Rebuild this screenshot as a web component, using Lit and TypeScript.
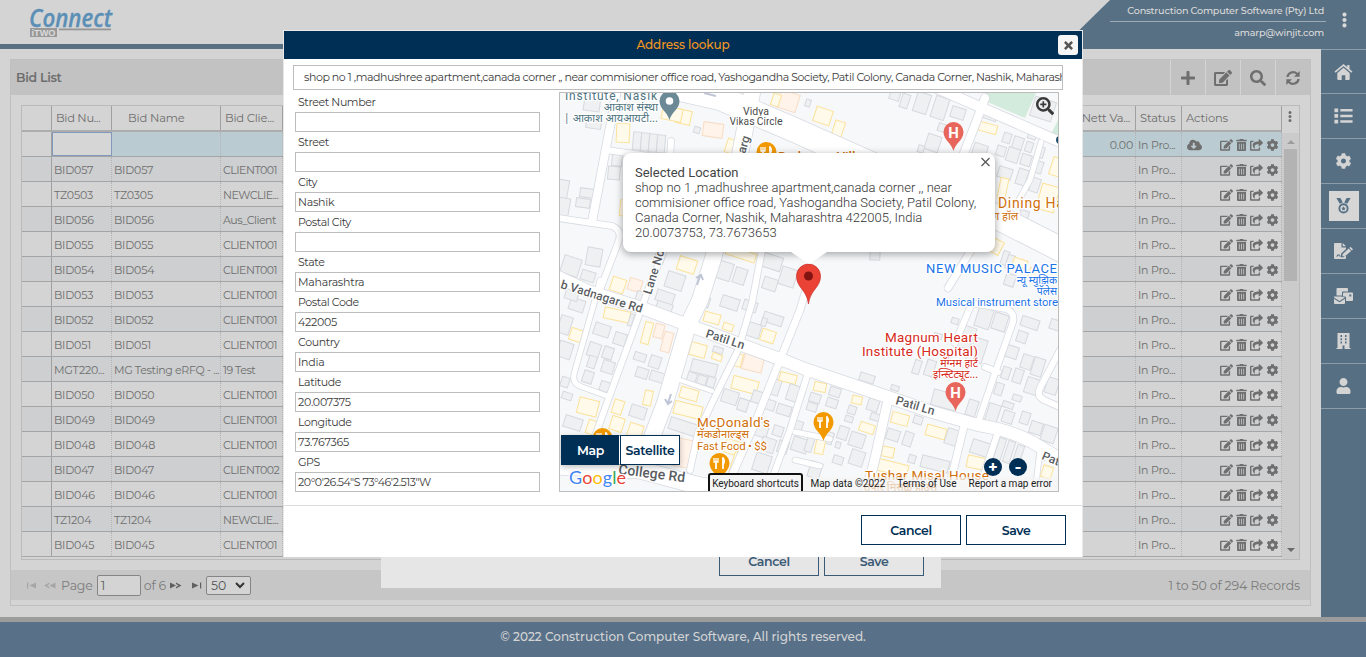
import { LitElement, html, css, svg } from 'lit';
import { customElement } from 'lit/decorators.js';

const ICONS: Record<string, [string, string]> = {
  edit: ['0 0 576 512', 'M402.6 83.2l90.2 90.2c3.8 3.8 3.8 10 0 13.8L274.4 405.6l-92.8 10.3c-12.4 1.4-22.9-9.1-21.5-21.5l10.3-92.8L388.8 83.2c3.8-3.8 10-3.8 13.8 0zm162-22.9l-48.8-48.8c-15.2-15.2-39.9-15.2-55.2 0l-35.4 35.4c-3.8 3.8-3.8 10 0 13.8l90.2 90.2c3.8 3.8 10 3.8 13.8 0l35.4-35.4c15.2-15.3 15.2-40 0-55.2zM384 346.2V448H64V128h229.8c3.2 0 6.2-1.3 8.5-3.5l40-40c7.6-7.6 2.2-20.5-8.5-20.5H48C21.5 64 0 85.5 0 112v352c0 26.5 21.5 48 48 48h352c26.5 0 48-21.5 48-48V306.2c0-10.7-12.9-16-20.5-8.5l-40 40c-2.2 2.3-3.5 5.3-3.5 8.5z'],
  cog: ['0 0 512 512', 'M487.4 315.7l-42.6-24.6c4.3-23.2 4.3-47 0-70.2l42.6-24.6c4.9-2.8 7.1-8.6 5.5-14-11.1-35.6-30-67.8-54.7-94.6-3.8-4.1-10-5.1-14.8-2.3L380.8 110c-17.9-15.4-38.5-27.3-60.8-35.1V25.8c0-5.6-3.9-10.5-9.4-11.7-36.7-8.2-74.3-7.8-109.2 0-5.5 1.2-9.4 6.1-9.4 11.7V75c-22.2 7.9-42.8 19.8-60.8 35.1L88.7 85.5c-4.9-2.8-11-1.9-14.8 2.3-24.7 26.7-43.6 58.9-54.7 94.6-1.7 5.4.6 11.2 5.5 14L67.3 221c-4.3 23.2-4.3 47 0 70.2l-42.6 24.6c-4.9 2.8-7.1 8.6-5.5 14 11.1 35.6 30 67.8 54.7 94.6 3.8 4.1 10 5.1 14.8 2.3l42.6-24.6c17.9 15.4 38.5 27.3 60.8 35.1v49.2c0 5.6 3.9 10.5 9.4 11.7 36.7 8.2 74.3 7.8 109.2 0 5.5-1.2 9.4-6.1 9.4-11.7v-49.2c22.2-7.9 42.8-19.8 60.8-35.1l42.6 24.6c4.9 2.8 11 1.9 14.8-2.3 24.7-26.7 43.6-58.9 54.7-94.6 1.5-5.5-.7-11.3-5.6-14.1zM256 336c-44.1 0-80-35.9-80-80s35.9-80 80-80 80 35.9 80 80-35.9 80-80 80z'],
  user: ['0 0 448 512', 'M224 256c70.7 0 128-57.3 128-128S294.7 0 224 0 96 57.3 96 128s57.3 128 128 128zm89.6 32h-16.7c-22.2 10.2-46.9 16-72.9 16s-50.6-5.8-72.9-16h-16.7C60.2 288 0 348.2 0 422.4V464c0 26.5 21.5 48 48 48h352c26.5 0 48-21.5 48-48v-41.6c0-74.2-60.2-134.4-134.4-134.4z'],
  trash: ['0 0 448 512', 'M32 464a48 48 0 0 0 48 48h288a48 48 0 0 0 48-48V128H32zm272-256a16 16 0 0 1 32 0v224a16 16 0 0 1-32 0zm-96 0a16 16 0 0 1 32 0v224a16 16 0 0 1-32 0zm-96 0a16 16 0 0 1 32 0v224a16 16 0 0 1-32 0zM432 32H312l-9.4-18.7A24 24 0 0 0 281.1 0H166.8a23.72 23.72 0 0 0-21.4 13.3L136 32H16A16 16 0 0 0 0 48v32a16 16 0 0 0 16 16h416a16 16 0 0 0 16-16V48a16 16 0 0 0-16-16z'],
  search: ['0 0 512 512', 'M505 442.7L405.3 343c-4.5-4.5-10.6-7-17-7H372c27.6-35.3 44-79.7 44-128C416 93.1 322.9 0 208 0S0 93.1 0 208s93.1 208 208 208c48.3 0 92.7-16.4 128-44v16.3c0 6.4 2.5 12.5 7 17l99.7 99.7c9.4 9.4 24.6 9.4 33.9 0l28.3-28.3c9.4-9.4 9.4-24.6.1-34zM208 336c-70.7 0-128-57.2-128-128 0-70.7 57.2-128 128-128 70.7 0 128 57.2 128 128 0 70.7-57.2 128-128 128z'],
  zoom: ['0 0 512 512', 'M505 442.7L405.3 343c-4.5-4.5-10.6-7-17-7H372c27.6-35.3 44-79.7 44-128C416 93.1 322.9 0 208 0S0 93.1 0 208s93.1 208 208 208c48.3 0 92.7-16.4 128-44v16.3c0 6.4 2.5 12.5 7 17l99.7 99.7c9.4 9.4 24.6 9.4 33.9 0l28.3-28.3c9.4-9.4 9.4-24.6.1-34zM208 346c-76 0-138-62-138-138S132 70 208 70s138 62 138 138-62 138-138 138zM184 120h48v64h64v48h-64v64h-48v-64h-64v-48h64z'],
  plus: ['0 0 448 512', 'M416 208H272V64c0-17.7-14.300-32-32-32h-32c-17.700 0-32 14.300-32 32v144H32c-17.700 0-32 14.300-32 32v32c0 17.700 14.300 32 32 32h144v144c0 17.700 14.300 32 32 32h32c17.700 0 32-14.300 32-32V304h144c17.700 0 32-14.300 32-32v-32c0-17.700-14.300-32-32-32z'],
  share: ['0 0 576 512', 'M568.500 177.400L424.500 313.400C409.300 327.800 384 317.100 384 296v-72c-144.600 1-205.600 35.100-164.800 171.400 4.500 15.100-12.800 26.600-25 17.300C155.300 383.100 120 326.500 120 269.300c0-143.900 117.600-172.500 264-173.300V24c0-21.100 25.300-31.800 40.500-17.400l144 136c10 9.500 10 25.400 0 34.800zM384 379.100V448H64V128h50.900a12 12 0 0 0 8.600-3.700c15.300-15.800 33.200-28.400 52.800-37.900C186.500 81.500 183 64 169.900 64H48C21.500 64 0 85.500 0 112v352c0 26.500 21.500 48 48 48h352c26.500 0 48-21.500 48-48v-88.800c0-8.200-7.900-14-15.700-11.700-11.800 3.400-24.100 4.100-33.100 3.400-8.400-.600-15.200 4-15.200 12.200z'],
  cloud: ['0 0 640 512', 'M537.600 226.600c4.100-10.700 6.400-22.400 6.400-34.600 0-53-43-96-96-96-19.700 0-38.100 6-53.300 16.200C367 64.200 315.300 32 256 32c-88.400 0-160 71.600-160 160 0 2.700.1 5.400.2 8.100C40.200 219.800 0 273.200 0 336c0 79.500 64.500 144 144 144h368c70.700 0 128-57.300 128-128 0-61.900-44-113.600-102.400-125.400zm-132.900 88.700L299.300 420.700c-6.200 6.200-16.400 6.200-22.600 0L171.300 315.300c-10.100-10.100-2.900-27.300 11.300-27.300H248V176c0-8.800 7.200-16 16-16h48c8.800 0 16 7.200 16 16v112h65.400c14.200 0 21.400 17.200 11.300 27.300z'],
  refresh: ['0 0 18 18', 'M1.500 8A7.600 7.600 0 0 1 14.300 3.300L16.500 1.200V7.500H10.200L12.600 5.100A5.200 5.200 0 0 0 4 8zM16.500 10A7.600 7.600 0 0 1 3.700 14.700L1.500 16.800V10.500H7.800L5.400 12.900A5.200 5.200 0 0 0 14 10z'],
  home: ['0 0 18 16', 'M9 0L0 7.500L1.100 8.800L9 2.200L16.900 8.800L18 7.500L15 5V1H12.700V3.100ZM9 3.800L2.800 9V15Q2.800 16 3.800 16H7.200V11.200H10.800V16H14.200Q15.200 16 15.200 15V9Z'],
  list: ['0 0 17 15', 'M0 .5H3.500V4H0ZM5.500 1H17V3.300H5.500ZM0 5.700H3.500V9.200H0ZM5.500 6.300H17V8.600H5.500ZM0 11H3.500V14.500H0ZM5.500 11.600H17V13.900H5.500Z'],
  medal: ['0 0 16 18', 'M0 0H4.500L7.200 5A6 6 0 0 0 3.800 6.500ZM11.500 0H16L12.200 6.500A6 6 0 0 0 8.800 5ZM8 6A5.700 5.700 0 1 1 8 17.400A5.700 5.700 0 1 1 8 6ZM8 8.100A3.600 3.600 0 1 0 8 15.300A3.600 3.600 0 1 0 8 8.100ZM8 9.300L8.800 10.900L10.500 11.100L9.200 12.300L9.600 14L8 13.200L6.400 14L6.800 12.300L5.500 11.100L7.200 10.900Z'],
  sign: ['0 0 19 16', 'M1 0H7.500V4.500H12V6L7 10.800V13.400H5.300Q4.800 12 3.700 13L3.200 13.800H2.200L3.400 11.500H4.300Q5.500 11 5.800 12.400H6.500V14.300H9.500L12 12V15Q12 16 11 16H1Q0 16 0 15V1Q0 0 1 0ZM8.700 0L12 3.300H8.700ZM16.500 3.800L19 6.200L17.800 7.400L15.400 5ZM14.700 5.600L17.100 8L11 13.300H8.500V11.300Z'],
  mail: ['0 0 19 16', 'M3.500 0H13Q14 0 14 1V3.500H9Q8 3.500 8 4.500V7.500H2.500V1Q2.500 0 3.500 0ZM10 4.500H18Q19 4.500 19 5.500V12Q19 13 18 13H12V9.500Q12 8.500 11 8.500H9V5.500Q9 4.500 10 4.500ZM15.300 6.500V8.500H17.300V6.500ZM0 8.500H7L11 9.500L5.500 13L0 9.500ZM0 10.800L5.500 14.300L11 10.800V15Q11 16 10 16H1Q0 16 0 15Z'],
  building: ['0 0 14 16', 'M1 0H13V15H14V16H8V12.500H6V16H0V15H1ZM4 2V4H5.500V2ZM8.500 2V4H10V2ZM4 5.300V7.300H5.500V5.300ZM8.500 5.300V7.300H10V5.300ZM4 8.600V10.600H5.500V8.600ZM8.500 8.600V10.600H10V8.600Z'],
  dots: ['0 0 6 18', 'M3 0A2.500 2.500 0 1 1 3 5A2.500 2.500 0 1 1 3 0ZM3 6.500A2.500 2.500 0 1 1 3 11.500A2.500 2.500 0 1 1 3 6.500ZM3 13A2.500 2.500 0 1 1 3 18A2.500 2.500 0 1 1 3 13Z'],
  close: ['0 0 10 10', 'M2 0L5 3L8 0L10 2L7 5L10 8L8 10L5 7L2 10L0 8L3 5L0 2Z'],
};

const icon = (name: string, cls = '') => html`<svg class="ic ${cls}" viewBox=${ICONS[name][0]}><path fill-rule="evenodd" d=${ICONS[name][1]}></path></svg>`;

const ROWS: [string, string, string][] = [
  ['BID057', 'BID057', 'CLIENT001'], ['TZ0503', 'TZ0305', 'NEWCLIE...'], ['BID056', 'BID056', 'Aus_Client'],
  ['BID055', 'BID055', 'CLIENT001'], ['BID054', 'BID054', 'CLIENT001'], ['BID053', 'BID053', 'CLIENT001'],
  ['BID052', 'BID052', 'CLIENT001'], ['BID051', 'BID051', 'CLIENT001'], ['MGT220...', 'MG Testing eRFQ - ...', '19 Test'],
  ['BID050', 'BID050', 'CLIENT001'], ['BID049', 'BID049', 'CLIENT001'], ['BID048', 'BID048', 'CLIENT001'],
  ['BID047', 'BID047', 'CLIENT002'], ['BID046', 'BID046', 'CLIENT001'], ['TZ1204', 'TZ1204', 'NEWCLIE...'],
  ['BID045', 'BID045', 'CLIENT001'],
];

const FIELDS: [string, string][] = [
  ['Street Number', ''], ['Street', ''], ['City', 'Nashik'], ['Postal City', ''], ['State', 'Maharashtra'],
  ['Postal Code', '422005'], ['Country', 'India'], ['Latitude', '20.007375'], ['Longitude', '73.767365'],
  ['GPS', '20°0\'26.54"S 73°46\'2.513"W'],
];

/* centre x, centre y, width, height, kind (g building, y shop, o public), rotation */
type B = [number, number, number, number, string?, number?];
const BUILDINGS: B[] = [
  [623, 133, 13, 19, 'y', 3], [637, 141, 8, 18, 'g', 5], [645, 142, 8, 18, 'g', 5], [653, 143, 8, 18, 'g', 5], [661, 144, 8, 18, 'g', 5],
  [594, 122, 15, 13, 'g', 8], [592, 104, 16, 14, 'g', 8], [617, 160, 10, 12, 'g', 5], [614, 173, 12, 13, 'g', 5], [587, 193, 14, 9, 'g', 8], [583, 203, 14, 9, 'g', 8],
  [563, 190, 10, 20, 'g', 10], [563, 209, 12, 22, 'g', 10], [684, 117, 14, 14, 'y', 12], [672, 114, 20, 13, 'y', 12], [713, 130, 20, 14, 'o', 8], [697, 130, 6, 6],
  [733, 147, 14, 14, 'y'], [788, 101, 20, 18, 'o'], [776, 100, 8, 12, 'y'], [624, 208, 8, 16, 'y', 5], [594, 257, 15, 18, 'g', 10], [571, 266, 18, 18], [588, 276, 14, 10],
  [618, 285, 14, 14, 'y'], [635, 285, 13, 12, 'o'], [687, 265, 18, 14, 'y'], [675, 281, 18, 16], [659, 259, 10, 8], [725, 271, 14, 18], [741, 254, 30, 9, 'y'], [740, 276, 12, 16],
  [772, 262, 20, 14], [788, 277, 16, 18], [770, 284, 14, 12], [823, 116, 17, 15, 'y'], [838, 130, 10, 18, 'y'], [895, 95, 10, 10], [905, 101, 8, 14], [922, 103, 14, 20],
  [940, 108, 14, 22], [958, 113, 14, 11], [808, 103, 5, 7], [933, 143, 14, 16], [921, 149, 6, 7], [943, 128, 10, 8], [988, 115, 18, 8], [988, 128, 18, 9, 'y', 15], [980, 150, 14, 12],
  [1007, 138, 8, 10], [1018, 143, 10, 12], [1032, 136, 8, 6], [1029, 147, 7, 10], [1040, 152, 8, 11], [1001, 151, 9, 10], [1013, 155, 12, 14], [1026, 160, 10, 11],
  [1038, 167, 9, 12], [1005, 173, 14, 11], [1022, 177, 10, 16], [1035, 185, 9, 14], [1003, 188, 8, 20, 'y', 12], [1048, 198, 18, 26, 'y', 15], [1057, 167, 12, 18, 'y'], [1024, 215, 9, 9],
  [995, 246, 14, 14, 'y', 28], [1005, 258, 6, 14], [1010, 262, 7, 14], [1020, 263, 14, 8, 'y'], [1035, 274, 12, 10, 'y'], [875, 255, 10, 10, 'g', 3], [1043, 109, 22, 20], [1010, 280, 10, 12],
  [577, 305, 15, 12], [565, 325, 12, 18], [617, 315, 26, 11, 'y', 12], [631, 320, 4, 12], [576, 335, 12, 12, 'y'], [602, 330, 16, 12], [620, 339, 12, 12], [647, 333, 8, 22, 'y', 15],
  [659, 331, 9, 14, 'o', 15], [667, 342, 9, 20, 'o', 15], [594, 350, 12, 14], [608, 353, 10, 12], [608, 367, 12, 12], [592, 362, 8, 12], [565, 350, 14, 16], [572, 294, 13, 12], [640, 357, 12, 8],
  [655, 362, 11, 12], [642, 373, 12, 10], [658, 377, 16, 10], [588, 377, 10, 12], [606, 387, 12, 10], [648, 398, 8, 15, 'y', 12], [638, 412, 16, 12], [618, 407, 10, 14, 'y'],
  [588, 407, 20, 16, 'y', 14], [573, 423, 18, 12], [567, 396, 10, 7], [617, 424, 13, 14, 'y'], [635, 432, 14, 16, 'y'], [594, 428, 14, 14, 'y'], [565, 382, 8, 10], [698, 350, 16, 13, 'y', 15],
  [718, 350, 10, 6], [717, 357, 10, 6, 'y', 20], [704, 368, 26, 13, 'g', 14], [692, 377, 9, 9], [702, 380, 9, 9], [711, 382, 8, 10], [689, 394, 18, 11, 'y', 16], [688, 410, 28, 13, 'y', 14], [684, 427, 30, 12, 'g', 18],
  [683, 453, 20, 28, 'o', 12], [712, 318, 16, 10, 'y', 15], [728, 327, 10, 7, 'y'], [730, 303, 18, 12], [705, 302, 9, 10], [750, 306, 14, 10], [753, 330, 15, 14], [773, 319, 20, 10], [764, 322, 5, 8], [768, 336, 14, 12, 'y'],
  [738, 360, 8, 13, 'y', 15], [753, 363, 20, 16, 'o', 14], [745, 385, 26, 13, 'y', 15], [730, 397, 16, 13], [743, 405, 10, 12], [757, 397, 10, 12], [775, 387, 10, 16], [770, 405, 10, 10], [788, 378, 17, 9, 'y', 14], [793, 393, 11, 16],
  [784, 410, 14, 10], [762, 430, 12, 14], [795, 427, 14, 14], [778, 431, 10, 10], [768, 445, 14, 14], [762, 463, 16, 18], [800, 445, 16, 14], [783, 447, 10, 12], [732, 447, 14, 14, 'y'], [736, 463, 8, 22, 'y'], [665, 297, 18, 11], [664, 308, 16, 11], [642, 297, 12, 10],
  [820, 387, 12, 9, 'y', 12], [835, 392, 11, 9], [815, 398, 11, 9], [832, 403, 11, 9], [812, 407, 10, 8], [857, 400, 10, 8, 'y', 12], [873, 405, 11, 12], [852, 410, 8, 8], [849, 419, 8, 6], [867, 428, 15, 9, 'y'], [875, 417, 9, 7],
  [843, 433, 10, 13], [857, 440, 15, 14], [829, 438, 8, 12], [820, 446, 9, 16, 'y', 12], [838, 460, 10, 8], [838, 445, 5, 6], [857, 458, 14, 15], [810, 443, 7, 18], [815, 470, 12, 16], [867, 378, 15, 8], [895, 388, 8, 5],
  [900, 419, 17, 11, 'y', 15], [918, 420, 9, 8], [936, 432, 20, 11, 'y', 15], [893, 435, 13, 11], [908, 439, 9, 14], [952, 437, 12, 16], [888, 452, 12, 10, 'y', 12], [912, 459, 7, 8], [935, 464, 28, 12, 'g', 14], [980, 448, 18, 14], [1000, 449, 7, 22], [1009, 452, 7, 22], [1018, 456, 7, 22],
  [893, 468, 30, 12, 'y', 14], [978, 463, 22, 12, 'y', 12], [945, 400, 26, 16, 'g', 15], [930, 368, 9, 16], [917, 367, 7, 14], [972, 408, 10, 16], [984, 318, 15, 20], [1000, 322, 14, 17], [966, 337, 16, 22], [977, 350, 16, 24], [955, 321, 7, 6], [938, 336, 8, 5],
  [1030, 323, 18, 10], [1022, 337, 10, 11], [1012, 352, 12, 12], [1027, 362, 11, 14], [1038, 367, 11, 18], [1006, 373, 8, 12], [1018, 376, 9, 14], [1032, 386, 13, 16], [999, 389, 8, 12], [1017, 398, 9, 6],
  [993, 413, 12, 18], [1008, 405, 11, 6], [1008, 417, 11, 12], [1025, 418, 9, 12], [1036, 428, 12, 12], [1049, 434, 14, 16], [1056, 325, 12, 10], [1052, 386, 12, 16], [1047, 472, 10, 12, 'y'], [1042, 455, 8, 10],
];

const ROADS: [string, number][] = [
  ['M617 90L606 148L592 222', 8], ['M606 150L670 159M670 159L671 141', 6], ['M558 218L612 226Q622 230 619 240L600 290', 6],
  ['M600 280L595 300L574 374Q572 384 582 387L610 397', 5], ['M668 240L648 290L630 340L608 400L592 445', 6],
  ['M752 93L735 180L712 262L700 300L688 325L665 403L652 437L642 470', 16], ['M762 250L752 303L738 350L712 403L698 433L690 470', 6],
  ['M812 270L800 310L780 360L755 423L730 480', 7], ['M808 373L790 430L768 490', 6], ['M888 400L874 463L866 492', 9], ['M965 422L948 492', 7],
  ['M998 432L978 492', 6], ['M978 423L995 373L1013 322Q1015 312 1006 309L972 303L955 343M985 367L998 372', 6], ['M970 252L948 288', 7],
  ['M985 98L975 125L964 153', 8], ['M930 85L980 107L1060 142', 10], ['M1041 142L1030 180L1016 205', 5], ['M1060 350L1040 388Q1036 396 1044 400L1062 408', 6],
  ['M680 380L712 391', 4], ['M795 432L830 439M795 460L820 466', 5], ['M676 88L720 98L790 128L880 168L995 216L1062 250', 24],
  ['M556 276L588 291L642 308L688 325L742 345L788 362L805 369L888 397L932 412L978 425Q1010 430 1032 442L1062 460', 12],
  ['M556 466L640 470L700 486L740 492', 17], ['M1040 450L1035 492', 5],
];

@customElement('app-root')
export class AppRoot extends LitElement {
  static styles = css`
    :host { display: block; position: relative; width: 1366px; height: 657px; overflow: hidden; background: #d4d4d4; font-family: Montserrat, Inter, "Noto Sans", sans-serif; color: #6e6e6e; }
    * { box-sizing: border-box; }
    .ic { display: block; fill: currentColor; }
    .page { display: flex; flex-direction: column; height: 657px; }
    .top { height: 49px; flex: none; display: flex; justify-content: space-between; border-bottom: 5px solid #587083; }
    .logo { margin-left: 28px; width: 90px; height: 44px; display: block; }
    .acct { width: 306px; height: 49px; background: #587083; clip-path: polygon(50px 0, 100% 0, 100% 100%, 0 100%); color: #dadada; font-size: 9.6px; font-weight: 500; display: flex; justify-content: flex-end; }
    .who { width: 216px; text-align: right; white-space: nowrap; }
    .who div { height: 22px; line-height: 22px; padding-right: 2px; letter-spacing: -.2px; }
    .who div:first-child { border-bottom: 1px solid #9caab4; }
    .acct .ic { width: 5px; height: 16px; margin: 12px 19px 0 16px; }
    .mid { display: flex; flex: 1; min-height: 0; }
    .main { flex: 1; padding: 10px 10px 11px 10px; }
    .side { width: 45px; background: #566f83; color: #d4d4d4; }
    .side div { height: 45px; border-bottom: 1px solid #8c9ca8; display: flex; align-items: center; justify-content: center; }
    .side div:first-child { border-top: 1px solid #8c9ca8; }
    .side .ic { width: 19px; height: 16px; }
    .side .on { width: 30px; height: 30px; background: #d6d6d6; color: #566f83; display: flex; align-items: center; justify-content: center; }
    .foot { flex: none; background: #587189; border-top: 5px solid #9c9c9c; color: #d4d4d4; height: 40px; text-align: center; line-height: 30px; font-size: 12px; font-weight: 500; letter-spacing: .01px; }
    .card { height: 547px; border: 1px solid #bfc0c1; display: flex; flex-direction: column; }
    .chead { height: 35px; flex: none; background: #c2c2c2; display: flex; justify-content: space-between; line-height: 36px; font-size: 12.5px; font-weight: 600; padding-left: 5px; letter-spacing: -.3px; }
    .tools { display: flex; }
    .tools div { width: 35px; border-left: 1px solid #d4d4d4; display: flex; align-items: center; justify-content: center; color: #6f6f6f; }
    .tools .ic { width: 18px; height: 16px; }
    .grid { margin: 10px 10px 0 10px; border: 1px solid #bababa; height: 455px; display: flex; }
    .tbl { width: 1260px; }
    .r { display: grid; grid-template-columns: 30px 60px 109px 62px 853px 46px 100px; height: 25px; border-bottom: 1px solid #a4a5a6; font-size: 11px; line-height: 27px; letter-spacing: -.2px; }
    .r > div { border-right: 1px dotted #b4b4b4; padding-left: 2px; white-space: nowrap; overflow: hidden; }
    .r > div:first-child { border-right: 1px solid #a0a0a0; }
    .r > div:nth-child(4) { letter-spacing: -.5px; }
    .r > div.long { letter-spacing: -.35px; }
    .r:nth-child(odd) { background: #cdcfd0; }
    .r.h { height: 26px; background: #d4d4d4; border-bottom: 2px solid #adadad; letter-spacing: -.15px; font-size: 11.5px; line-height: 25px; }
    .r.h > div { border-right: 1px solid #a0a0a0; padding-left: 4px; }
    .r.h > div:nth-child(2) { letter-spacing: -.3px; }
    .r.h > div:nth-child(3) { padding-left: 16px; }
    .r.h > div:nth-child(4) { letter-spacing: -.2px; }
    .r.f { background: #bacbd1; }
    .r.f > div:first-child { background: #d4d4d4; }
    .r.f > div:nth-child(2) { background: #d6d6d6; border: 1px solid #8199bb; }
    .r .num { text-align: right; padding-right: 2px; }
    .act { display: flex; align-items: center; justify-content: flex-end; gap: 3px; padding: 2px 2px 0 0; color: #6f6f70; }
    .act .ic { height: 12px; width: 13px; }
    .act .t { width: 11px; }
    .act .cl { width: 15px; margin-right: 15px; }
    .bar { flex: 1; background: #cbcbcb; display: flex; flex-direction: column; align-items: center; }
    .bar .top3 { height: 27px; width: 100%; background: #d4d4d4; display: flex; justify-content: center; padding: 5px 1px 0 0; flex: none; }
    .bar .top3 .ic { width: 4px; height: 11px; }
    .up, .dn { border: 4px solid transparent; border-top: 0; border-bottom: 4px solid #9d9d9d; margin-top: 7px; }
    .th { width: 13px; height: 132px; background: #b3b3b3; margin-top: 5px; }
    .dn { margin-top: auto; margin-bottom: 7px; border-bottom: 0; border-top: 4px solid #6a6a6a; }
    .pager { margin-top: 10px; height: 30px; background: #c6c6c6; display: flex; align-items: center; font-size: 12.5px; color: #7c7c7c; padding: 0 10px 0 15px; letter-spacing: -.15px; }
    .pager svg { width: 12px; height: 9px; flex: none; }
    .pager .prev { margin: 0 5px 0 6px; }
    .pager .next { margin: 0 9px 0 4px; }
    .pg { width: 44px; height: 21px; border: 1px solid #858585; border-radius: 2px; margin: 0 3px 0 4px; padding-left: 3px; line-height: 19px; color: #5c5c5c; background: #d4d4d4; }
    .sel { width: 45px; height: 19px; border: 1px solid #858585; border-radius: 2px; margin-left: 3px; padding: 0 4px; line-height: 17px; color: #555; background: #d4d4d4; display: flex; align-items: center; justify-content: space-between; }
    .rec { margin-left: auto; }
    .btn { width: 100px; height: 30px; border: 1px solid #002f56; color: #002f56; font-size: 12.5px; font-weight: 600; line-height: 30px; text-align: center; letter-spacing: -.35px; }
    .rear { position: absolute; left: 381px; top: 480px; width: 560px; height: 108px; background: #e6e6e6; display: flex; justify-content: flex-end; align-items: flex-end; gap: 5px; padding: 0 17px 12px; }
    .rear .btn { border-color: #3b5a76; color: #3b5a76; }
    .modal { position: absolute; left: 283px; top: 30px; width: 800px; height: 527px; background: #fff; border: 1px solid #e8e8e8; border-width: 1px 1px 0; display: flex; flex-direction: column; }
    .mh { height: 28px; flex: none; background: #002f56; color: #f7981d; display: flex; align-items: center; font-size: 12px; font-weight: 500; letter-spacing: -.1px; }
    .mh span { flex: 1; text-align: center; padding: 0 0 2px 24px; }
    .x { width: 20px; height: 20px; background: #f6f6f6; border-radius: 3px; margin-right: 4px; display: flex; align-items: center; justify-content: center; color: #555; }
    .x .ic { width: 9px; height: 9px; }
    .mb { height: 446px; padding: 6px 9px 0; font-size: 11px; color: #3b3b3b; flex: none; }
    .q { width: 770px; height: 25px; border: 1px solid #bdbdbd; line-height: 23px; padding-left: 10px; white-space: nowrap; overflow: hidden; letter-spacing: -.435px; }
    .cols { display: flex; gap: 19px; padding: 2px 0 0 2px; }
    .fields { width: 245px; }
    .fields label { display: block; height: 20px; line-height: 20px; padding-left: 3px; letter-spacing: -.4px; }
    .in { height: 20px; border: 1px solid #bdbdbd; line-height: 19px; padding-left: 2px; letter-spacing: -.25px; }
    .in.long { letter-spacing: -.45px; }
    .mf { border-top: 1px solid #ddd; flex: 1; display: flex; justify-content: flex-end; gap: 5px; padding: 9px 16px; }
    .map { position: relative; width: 500px; height: 400px; border: 1px solid #bdbdbd; overflow: hidden; font-family: Roboto, sans-serif; }
    .cv { display: block; width: 498px; height: 398px; }
    .iw { position: absolute; left: 63px; top: 60px; width: 372px; height: 99px; border-radius: 8px; background: #fff; box-shadow: 0 2px 7px 1px rgba(0,0,0,.3); padding: 12px 12px; font-size: 13px; line-height: 15px; font-weight: 300; color: #333; white-space: nowrap; }
    .iw b { display: block; font-weight: 400; color: #444; }
    .tail { position: absolute; left: 231px; top: 159px; width: 36px; height: 12px; background: #fff; clip-path: polygon(0 0, 100% 0, 50% 100%); }
    .iwx { position: absolute; right: 5px; top: 4px; width: 9px; height: 10px; stroke: #555; stroke-width: 1.2; }
    .mt { position: absolute; left: 1px; top: 342px; display: flex; font: 600 12.5px Montserrat, Inter, sans-serif; letter-spacing: -.35px; box-shadow: 0 2px 6px rgba(0,0,0,.25); }
    .mt div { width: 60px; height: 30px; line-height: 30px; border: 1px solid #002f56; background: #fff; color: #002f56; text-align: center; }
    .mt .a { width: 59px; background: #002f56; color: #fff; border-right-color: #fff; }
    .zi { position: absolute; right: 4px; top: 4px; width: 18px; height: 18px; color: #3a3a3a; }
    .terms { position: absolute; right: 0; bottom: 0; height: 14px; line-height: 14px; font-size: 10px; color: #1b1b1b; background: rgba(245,245,245,.7); display: flex; white-space: nowrap; }
    .terms span { padding: 0 6px; }
    .kb { position: absolute; left: 148px; top: 380px; width: 95px; height: 22px; border: 2px solid #111; border-radius: 3px; background: #f5f5f5; color: #222; font-size: 10px; line-height: 18px; text-align: center; white-space: nowrap; }
    .z { position: absolute; top: 365px; width: 18px; height: 18px; border-radius: 9px; background: #002f56; color: #fff; font: 800 15px/17px Inter, sans-serif; text-align: center; }
    .z1 { left: 424px; } .z2 { left: 449px; }
    .halo { paint-order: stroke; stroke: #fff; stroke-width: 2.5px; stroke-linejoin: round; }
    .dev { font-family: "Noto Sans Devanagari", "Noto Sans", sans-serif; }
  `;

  private map() {
    const fill: any = { g: '#eef0f2', y: '#fffaea', o: '#fff3ea' };
    const line: any = { g: '#d6d9dd', y: '#fbe29a', o: '#f8dcc4' };
    const pin = (x: number, y: number, c: string, g: unknown) => svg`<g transform="translate(${x} ${y})"><path d="M0 19C-2 11 -10 8 -10 0A10 10 0 0 1 10 0C10 8 2 11 0 19Z" fill=${c}/>${g}</g>`;
    const fork = svg`<g stroke="#fff" stroke-width="1.800" fill="none"><path d="M-3.500 6V0M3.500 6V-5.500"/><path d="M-5.500-5V-1H-1.500V-5M-3.500-5V0" stroke-width="1.300"/><path d="M3-5.500Q6-3 4 1" stroke-width="1.500"/></g>`;
    const H = svg`<text y="5.500" text-anchor="middle" font-size="15" font-weight="700" fill="#fff">H</text>`;
    return html`<svg class="cv" viewBox="560 93 498 398">
      <rect x="560" y="93" width="498" height="398" fill="#f7f8fa"></rect>
      <path d="M986 93H1036L1025 118L985 101Z M1058 120L1052 132L1058 136Z" fill="#d3ebdc"></path>
      ${BUILDINGS.map(([x, y, w, h, k = 'g', r = 18]) => svg`<rect x=${x - w / 2} y=${y - h / 2} width=${w} height=${h} transform="rotate(${r} ${x} ${y})" fill=${fill[k]} stroke=${line[k]} stroke-width="1"/>`)}
      ${ROADS.map(([d, w]) => svg`<path d=${d} fill="none" stroke="#d8dbe2" stroke-width=${w + 1.6} stroke-linejoin="round" stroke-linecap="round"/>`)}
      ${ROADS.map(([d, w]) => svg`<path d=${d} fill="none" stroke="#fff" stroke-width=${w} stroke-linejoin="round" stroke-linecap="round"/>`)}
      <g fill="none" stroke="#bfc5d6" stroke-width="2"><path d="M697 285L700 276M696 278L701 275L703 280M671 394L668 403M665 399L668 404L672 401M704 93L716 96"></path></g>
      ${pin(669.5, 101, '#6b8a95', svg`<circle r="3.800" fill="#fff"/>`)}
      ${pin(953.5, 132, '#e8655b', H)} ${pin(955.5, 392, '#e8655b', H)}
      ${pin(766.5, 152, '#f29900', fork)} ${pin(823.5, 422, '#f29900', fork)} ${pin(719.5, 463, '#f29900', fork)} ${pin(602.5, 438, '#f29900', fork)}
      <g class="halo" font-size="12" fill="#4e7481">
        <text x="565" y="100" textLength="92">Institute, Nasik</text>
        <g class="dev" font-size="11" text-anchor="end"><text x="658" y="111">आकाश संस्था</text><text x="658" y="122">| आकाश आयआयटी...</text></g>
      </g>
      <g class="halo" font-size="10.500" fill="#4a4a4a" text-anchor="middle"><text x="756" y="115">Vidya</text><text x="756" y="125" textLength="53">Vikas Circle</text></g>
      <g class="halo" font-size="12" font-weight="500" fill="#595d62">
        <text transform="translate(651 295) rotate(-73)" textLength="46">Lane No</text>
        <text transform="translate(745 154) rotate(-73)">arg</text>
        <text transform="translate(560 288) rotate(17)" textLength="85">b Vadnagare Rd</text>
        <text transform="translate(705 337) rotate(18)" textLength="40">Patil Ln</text>
        <text transform="translate(895 404) rotate(16)" textLength="40">Patil Ln</text>
        <text transform="translate(1041 459) rotate(22)">Patil</text>
        <text transform="translate(618 474) rotate(7)" font-size="14" textLength="67">College Rd</text>
      </g>
      <g class="halo" fill="#d0700a" font-size="13">
        <text x="778" y="161" font-weight="500">Barbeque Ville</text><text x="998" y="208" font-size="14" textLength="74">Dining Hall</text><text class="dev" x="993" y="220" font-size="11">ग हॉल</text>
        <text x="697" y="427" textLength="73" font-size="13.500">McDonald's</text><text class="dev" x="697" y="438" font-size="10.500" textLength="52" lengthAdjust="spacingAndGlyphs">मॅकडोनाल्ड्स</text><text x="697" y="450" font-size="11.500" textLength="70">Fast Food • $$</text>
        <text x="865" y="480" font-size="13.500" textLength="124">Tushar Misal House</text><text class="dev" x="864" y="491" font-size="11">तुषार मिसळ हाउस</text>
      </g>
      <g class="halo" fill="#1a73e8" text-anchor="end"><text x="1057" y="273" font-size="13" textLength="131">NEW MUSIC PALACE</text><text class="dev" x="1057" y="284" font-size="10.500">न्यू म्युझिक</text><text class="dev" x="1057" y="295" font-size="10.500">पॅलेस</text><text x="1058" y="306" font-size="11.500" textLength="122">Musical instrument store</text></g>
      <g class="halo" fill="#d62a20" text-anchor="end"><text x="978" y="342" font-size="13.500" textLength="93">Magnum Heart</text><text x="978" y="356" font-size="13.500" textLength="116">Institute (Hospital)</text><text class="dev" x="978" y="367" font-size="10.500">मॅग्नम हार्ट</text><text class="dev" x="978" y="378" font-size="10.500">इन्स्टिट्यूट...</text></g>
      <g transform="translate(808.500 276)"><path d="M0 28C-2 13 -12 12 -12 0A12 12 0 0 1 12 0C12 12 2 13 0 28Z" fill="#ea4335" stroke="#c5221f" stroke-width=".6"></path><circle r="4.500" fill="#811411"></circle></g>
      <text class="halo" x="569" y="484" font-family="Lato, sans-serif" font-size="18" font-weight="400" textLength="57"><tspan fill="#4285f4">G</tspan><tspan fill="#ea4335">o</tspan><tspan fill="#fbbc04">o</tspan><tspan fill="#4285f4">g</tspan><tspan fill="#34a853">l</tspan><tspan fill="#ea4335">e</tspan></text>
      <circle cx="1060" cy="140" r="4" fill="#1d4a66"></circle>
    </svg>`;
  }

  private actions(cloud = false) {
    return html`<div class="act">${cloud ? icon('cloud', 'cl') : ''}${icon('edit')}${icon('trash', 't')}${icon('share')}${icon('cog')}</div>`;
  }

  render() {
    return html`
      <div class="page">
        <div class="top">
          <svg class="logo" viewBox="28 0 90 44">
            <text x="29" y="27" font-family="Open Sans, sans-serif" font-style="italic" font-weight="600" font-size="25" textLength="83" lengthAdjust="spacingAndGlyphs" fill="#5b8fb6" stroke="#5b8fb6" stroke-width=".3">Connect</text>
            <rect x="30" y="28" width="27" height="9" fill="#999"></rect>
            <text x="31.500" y="36" font-family="Liberation Sans, sans-serif" font-weight="700" font-size="9.500" textLength="24" lengthAdjust="spacingAndGlyphs" fill="#dcdcdc">iTWO</text>
            <rect x="59" y="28.500" width="52" height="1.800" fill="#969696"></rect>
          </svg>
          <div class="acct"><div class="who"><div>Construction Computer Software (Pty) Ltd</div><div>amarp@winjit.com</div></div>${icon('dots')}</div>
        </div>
        <div class="mid">
          <div class="main">
            <div class="card">
              <div class="chead"><span>Bid List</span><div class="tools"><div>${icon('plus')}</div><div>${icon('edit')}</div><div>${icon('search')}</div><div>${icon('refresh')}</div></div></div>
              <div class="grid">
                <div class="tbl">
                  <div class="r h"><div></div><div>Bid Nu...</div><div>Bid Name</div><div>Bid Clie...</div><div class="num">Nett Va...&nbsp;</div><div>Status</div><div>Actions</div></div>
                  <div class="r f"><div></div><div></div><div></div><div></div><div class="num">0.00</div><div>In Pro...</div>${this.actions(true)}</div>
                  ${ROWS.map(r => html`<div class="r"><div></div><div>${r[0]}</div><div class=${r[1].length > 10 ? 'long' : ''}>${r[1]}</div><div>${r[2]}</div><div></div><div>In Pro...</div>${this.actions()}</div>`)}
                </div>
                <div class="bar"><div class="top3">${icon('dots')}</div><div class="up"></div><div class="th"></div><div class="dn"></div></div>
              </div>
              <div class="pager">
                <svg viewBox="0 0 12 9" fill="#a6a6a6"><path d="M1 1.500H2.200V7.500H1ZM10 1.500V7.500L3.500 4.500Z"></path></svg>
                <svg class="prev" viewBox="0 0 12 9" fill="#a6a6a6"><path d="M5.500 1.500V3L3 4.500L5.500 6V7.500L0 4.500ZM11.500 1.500V7.500L5.500 4.500Z"></path></svg>
                <span>Page</span><div class="pg">1</div><span>of 6</span>
                <svg class="next" viewBox="0 0 12 9" fill="#606060"><path d="M0 1.500L6 4.500L0 7.500ZM6 1.500L11.500 4.500L6 7.500V6L8.500 4.500L6 3Z"></path></svg>
                <svg viewBox="0 0 12 9" fill="#606060"><path d="M1 1.500L7.500 4.500L1 7.500ZM9 1.500H10.200V7.500H9Z"></path></svg>
                <div class="sel"><span>50</span><svg viewBox="0 0 12 9" fill="none" stroke="#333" stroke-width="2"><path d="M2 2L6 6L10 2"></path></svg></div>
                <span class="rec">1 to 50 of 294 Records</span>
              </div>
            </div>
          </div>
          <div class="side"><div>${icon('home')}</div><div>${icon('list')}</div><div>${icon('cog')}</div><div><span class="on">${icon('medal')}</span></div><div>${icon('sign')}</div><div>${icon('mail')}</div><div>${icon('building')}</div><div>${icon('user')}</div></div>
        </div>
        <div class="foot">© 2022 Construction Computer Software, All rights reserved.</div>
      </div>
      <div class="rear"><div class="btn">Cancel</div><div class="btn">Save</div></div>
      <div class="modal">
        <div class="mh"><span>Address lookup</span><div class="x">${icon('close')}</div></div>
        <div class="mb">
          <div class="q">shop no 1 ,madhushree apartment,canada corner ,, near commisioner office road, Yashogandha Society, Patil Colony, Canada Corner, Nashik, Maharashtra</div>
          <div class="cols">
            <div class="fields">${FIELDS.map(([l, v]) => html`<label>${l}</label><div class="in ${v.length > 20 ? 'long' : ''}">${v}</div>`)}</div>
            <div class="map">
              ${this.map()}
              <div class="iw"><b>Selected Location</b>shop no 1 ,madhushree apartment,canada corner ,, near<br>commisioner office road, Yashogandha Society, Patil Colony,<br>Canada Corner, Nashik, Maharashtra 422005, India<br>20.0073753, 73.7673653
                <svg class="iwx" viewBox="0 0 9 9"><path d="M.5 .5L8.500 8.500M8.500 .5L.5 8.500"></path></svg></div>
              <div class="tail"></div>
              ${icon('zoom', 'zi')}
              <div class="mt"><div class="a">Map</div><div>Satellite</div></div>
              <div class="terms"><span>Map data ©2022</span><span>Terms of Use</span><span>Report a map error</span></div>
              <div class="kb">Keyboard shortcuts</div>
              <div class="z z1">+</div><div class="z z2">-</div>
            </div>
          </div>
        </div>
        <div class="mf"><div class="btn">Cancel</div><div class="btn">Save</div></div>
      </div>`;
  }
}
